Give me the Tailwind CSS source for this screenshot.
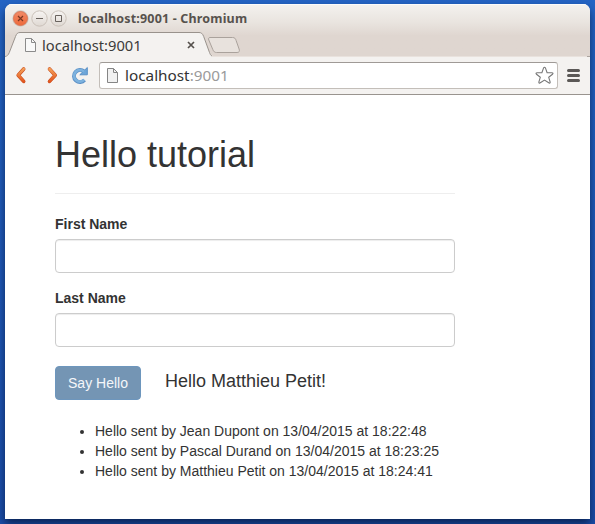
<!DOCTYPE html>
<html lang="en">
<head>
<meta charset="utf-8">
<title>localhost:9001</title>
<script src="https://cdn.jsdelivr.net/npm/@tailwindcss/browser@4"></script>
</head>
<body class="h-[524px] w-[595px] overflow-hidden bg-linear-to-b from-[#2464c4] to-[#1b4da8] px-[5px] pt-1 font-['Liberation_Sans',sans-serif] text-sm leading-5 text-[#333]">
<div class="flex h-[515px] w-[585px] flex-col overflow-hidden rounded-t-[7px] bg-white shadow-[0_5px_8px_0px_rgba(0,15,45,0.65)]">
  <header class="relative h-[53px] shrink-0 bg-linear-to-b from-[#f4f2ef] via-[#e9e4df] via-35% to-[#dfd6d0] to-60% font-['Noto_Sans',sans-serif] shadow-[inset_0_1px_0_#fcfbfa]">
    <svg class="absolute inset-0" width="585" height="53" viewBox="5 4 585 53" fill="none">
      <defs>
        <linearGradient id="close" x2="0" y2="1"><stop stop-color="#f18b68"/><stop offset="1" stop-color="#ee693a"/></linearGradient>
        <linearGradient id="round" x2="0" y2="1"><stop stop-color="#f7f5f3"/><stop offset="1" stop-color="#dfd8d2"/></linearGradient>
      </defs>
      <circle cx="20.5" cy="18.5" r="8.200" fill="#d0c7c0"/><circle cx="20.5" cy="18.5" r="7" fill="url(#close)" stroke="#d9714f" stroke-width=".8"/>
      <path d="M18 16l5 5m0-5l-5 5" stroke="#793622" stroke-width="1.2"/>
      <circle cx="39.5" cy="18.5" r="7.7" fill="url(#round)" stroke="#c9c0b8"/><path d="M36 18.5h7" stroke="#69635e"/>
      <circle cx="58.5" cy="18.5" r="7.7" fill="url(#round)" stroke="#c9c0b8"/><path d="M55.5 15.5h6v6h-6z" stroke="#69635e"/>
      <path d="M5 57v-1c2-.4 3.200-1.200 4.300-4l6.200-15.500c1.100-3 2.300-4 4.500-4h179c2.200 0 3.500 1 4.700 4l5.800 15.500c.8 2 2 4 4 4H590v1z" fill="#f4f2f0"/>
      <path d="M5 56.500c2-.4 3.200-1.200 4.300-4l6.200-16c1.100-3 2.300-4 4.500-4h179c2.200 0 3.500 1 4.700 4l5.800 16c.6 1.600 1.200 3 2.500 3.500" stroke="#99928c"/>
      <path d="M212 56.500h375" stroke="#e9e2dd"/><path d="M587 56.500h3" stroke="#aaa39e"/>
      <path d="M210 37.500h22.500c2.200 0 3 1 3.600 3l3 8.500c.8 2 .1 3.500-2 3.500h-20.500c-2 0-3-1-3.800-3l-4-9.500c-.6-1.500-.2-2.500 1.200-2.500z" fill="#e8e2dd" stroke="#aaa29c"/>
      <path d="M25.500 38.500h6l4 4v9h-10z" fill="#f9f9f9" stroke="#8b8b8b"/><path d="M31.500 38.500v4h4" stroke="#8b8b8b"/>
      <path d="M188 42l6 6m0-6l-6 6" stroke="#55504c" stroke-width="1.700"/>
    </svg>
    <div class="absolute left-[73px] top-[5px] text-[12.500px] font-bold whitespace-nowrap text-[#57524d]"><span class="inline-block tracking-[0.17px]">localhost:9001 - Chromium</span></div>
    <div class="absolute left-[37px] top-[31px] text-[14.700px] whitespace-nowrap text-[#3c3b3a]">localhost:9001</div>
  </header>
  <nav class="flex h-[38px] shrink-0 items-start border-b border-[#99948f] bg-[#f4f2f0] font-['Noto_Sans',sans-serif]">
    <svg class="h-9 w-[94px]" viewBox="5 57 94 36" fill="none">
      <defs>
        <linearGradient id="orange" x1="0" y1="68" x2="0" y2="83" gradientUnits="userSpaceOnUse"><stop stop-color="#f5a45c"/><stop offset="1" stop-color="#e14f18"/></linearGradient>
      </defs>
      <g stroke-linecap="round" stroke-linejoin="round">
        <path d="M23.700 69l-5.500 6.200 5.500 6.200M49.500 69l5.700 6.200-5.700 6.200" stroke="#c84b1d" stroke-width="3.600"/>
        <path d="M23.700 69l-5.500 6.200 5.500 6.200M49.500 69l5.700 6.200-5.700 6.200" stroke="url(#orange)" stroke-width="2.600"/>
      </g>
      <path d="M84.500 80a6 6 0 1 1-.5-8.500" stroke="#5b90c6" stroke-width="4"/>
      <path d="M87.300 67.500v7.300h-7.500z" fill="#6da6d9" stroke="#5b90c6" stroke-linejoin="round"/>
      <path d="M84.200 79.700a5.800 5.800 0 1 1-.2-8" stroke="#7db2de" stroke-width="2.600"/>
    </svg>
    <div class="mt-[5px] flex h-[27px] w-[459px] items-center rounded-[3px] border border-[#c3beb9] border-t-[#9f9a96] bg-white">
      <svg class="ml-1.5 h-[17px] w-[13px]" viewBox="0 0 13 17" fill="none"><path d="M1.500 1.500h6l4 4v10h-10z" fill="#f1f1f1" stroke="#858585"/><path d="M7.500 1.500v4h4" stroke="#858585"/></svg>
      <span class="ml-1.5 -mt-0.5 text-[15.300px] whitespace-nowrap text-[#9a9a9a]"><span class="text-[#333]">localhost</span>:9001</span>
      <svg class="mr-[3px] ml-auto size-[19px]" viewBox="0 0 19 19" fill="none"><path d="M9.500 1.200c.5 0 .8.400 1 .9l1.600 4.500 4.800.1c1.200 0 1.400.9.600 1.600l-3.800 3 1.400 4.500c.3 1.200-.4 1.700-1.400 1l-4.200-2.700-4.200 2.700c-1 .7-1.700.2-1.400-1l1.400-4.500-3.800-3c-.8-.7-.6-1.600.6-1.600l4.800-.1L8.500 2.100c.2-.5.500-.9 1-.9z" stroke="#777" stroke-width="1.100"/></svg>
    </div>
    <svg class="mt-[11px] ml-[9px] h-4 w-[13px]" viewBox="0 0 13 16" stroke="#5b5856" stroke-width="3" stroke-linecap="round"><path d="M1.500 2.500h10m-10 5h10m-10 5h10"/></svg>
  </nav>
  <main class="ml-[50px] w-[400px] pt-10">
    <h1 class="mb-5 h-[59px] border-b border-[#eee] text-[36px] leading-[39.600px] font-normal">Hello tutorial</h1>
    <form>
      <label for="first" class="mb-[5px] block font-bold">First Name</label>
      <input id="first" class="mb-[15px] block h-[34px] w-full rounded-[4px] border border-[#ccc] px-3 shadow-[inset_0_1px_1px_rgba(0,0,0,0.075)]">
      <label for="last" class="mb-[5px] block font-bold">Last Name</label>
      <input id="last" class="block h-[34px] w-full rounded-[4px] border border-[#ccc] px-3 shadow-[inset_0_1px_1px_rgba(0,0,0,0.075)]">
      <div class="mt-[19px] flex items-start">
        <button type="button" class="h-[34px] w-[86px] rounded-[4px] border border-[#6d96bd] bg-[#7495b4] text-[#f5f7fa]">Say Hello</button>
        <p class="mt-[5px] ml-6 text-lg leading-5">Hello Matthieu Petit!</p>
      </div>
    </form>
    <ul class="mt-[21px] list-disc pl-10 whitespace-nowrap">
      <li>Hello sent by Jean Dupont on 13/04/2015 at 18:22:48</li>
      <li>Hello sent by Pascal Durand on 13/04/2015 at 18:23:25</li>
      <li>Hello sent by Matthieu Petit on 13/04/2015 at 18:24:41</li>
    </ul>
  </main>
</div>
</body>
</html>
